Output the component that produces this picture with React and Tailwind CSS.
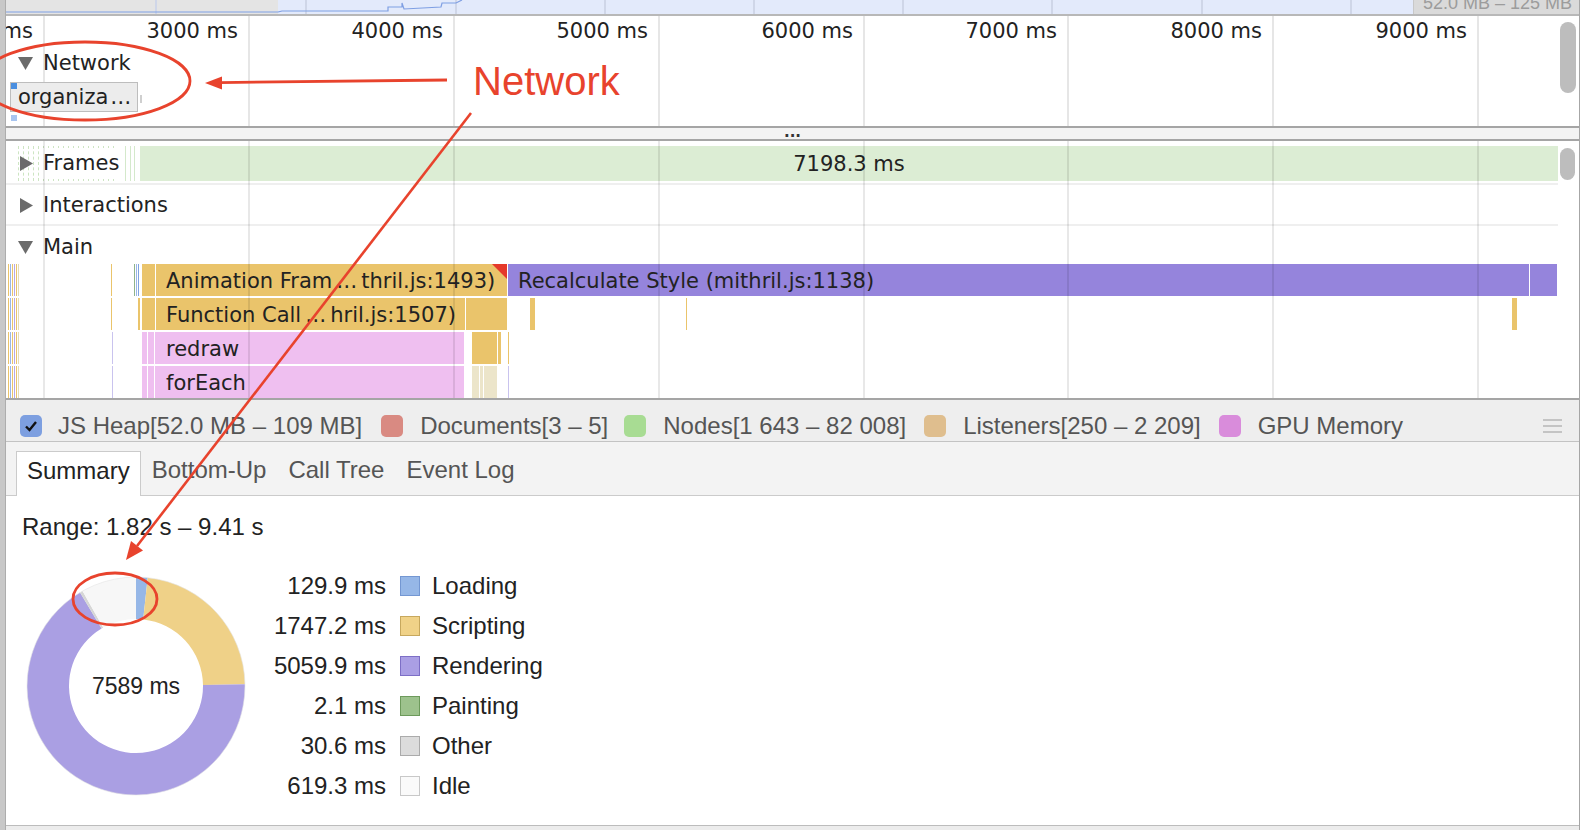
import React from "react";

// timeline grid, x relative to the main column (page x - 6)
const GRID = [37, 242, 447, 652, 857, 1061, 1266, 1471];
const RULER = ["2000 ms", "3000 ms", "4000 ms", "5000 ms", "6000 ms", "7000 ms", "8000 ms", "9000 ms"];
const OVERVIEW_GRID = [149, 299, 449, 598, 747, 896, 1045, 1195, 1344];

const Y = "bg-[#eac46b]";
const P = "bg-[#9584dc]";
const PK = "bg-[#efbff0]";
const BG = "bg-[#ece5ca]";
const W = "bg-white";

// flame chart blocks, x in page coords
const stripes = [
  { x: 8, w: 1, c: Y },
  { x: 10, w: 1, c: "bg-[#9bb6e8]" },
  { x: 12, w: 1, c: Y },
  { x: 14, w: 1, c: "bg-[#b7a8e6]" },
  { x: 16, w: 1, c: Y },
  { x: 18, w: 1, c: "bg-[#e6dcb6]" },
];

const ROWS = [
  [
    ...stripes,
    { x: 111, w: 1, c: Y },
    { x: 134, w: 1, c: "bg-[#8fb38a]" },
    { x: 136, w: 1, c: "bg-[#9bb6e8]" },
    { x: 138, w: 1, c: "bg-[#7ea3e0]" },
    { x: 142, w: 365, c: Y, t: "Animation Fram…thril.js:1493)", tx: 166, tri: true },
    { x: 155, w: 1, c: W },
    { x: 508, w: 1021, c: P, t: "Recalculate Style (mithril.js:1138)", tx: 518 },
    { x: 1530, w: 27, c: P },
  ],
  [
    ...stripes,
    { x: 111, w: 1, c: Y },
    { x: 138, w: 2, c: Y },
    { x: 142, w: 365, c: Y, t: "Function Call…hril.js:1507)", tx: 166 },
    { x: 155, w: 1, c: W },
    { x: 465, w: 1, c: W },
    { x: 530, w: 5, c: Y },
    { x: 686, w: 1, c: Y },
    { x: 1512, w: 5, c: Y },
  ],
  [
    ...stripes,
    { x: 112, w: 1, c: "bg-[#c9c3ee]" },
    { x: 142, w: 322, c: PK, t: "redraw", tx: 166 },
    { x: 147, w: 1, c: W },
    { x: 154, w: 1, c: W },
    { x: 472, w: 25, c: Y },
    { x: 498, w: 3, c: Y },
    { x: 508, w: 1, c: Y },
  ],
  [
    ...stripes,
    { x: 112, w: 1, c: "bg-[#c9c3ee]" },
    { x: 142, w: 322, c: PK, t: "forEach", tx: 166 },
    { x: 147, w: 1, c: W },
    { x: 154, w: 1, c: W },
    { x: 472, w: 25, c: BG },
    { x: 479, w: 1, c: W },
    { x: 483, w: 1, c: W },
    { x: 508, w: 1, c: "bg-[#c9c3ee]" },
  ],
];

const SUMMARY = [
  { v: 129.9, ms: "129.9 ms", name: "Loading", sw: "bg-[#96b7e7] border-[#7497d2]", fill: "#96b7e7" },
  { v: 1747.2, ms: "1747.2 ms", name: "Scripting", sw: "bg-[#f0d288] border-[#c7a85e]", fill: "#efd188" },
  { v: 5059.9, ms: "5059.9 ms", name: "Rendering", sw: "bg-[#aa9fe4] border-[#7d6fc6]", fill: "#aa9fe3" },
  { v: 2.1, ms: "2.1 ms", name: "Painting", sw: "bg-[#9dc28d] border-[#6d9a5c]", fill: "#9dc28d" },
  { v: 30.6, ms: "30.6 ms", name: "Other", sw: "bg-[#dcdcdc] border-[#ababab]", fill: "#d6d6d6" },
  { v: 619.3, ms: "619.3 ms", name: "Idle", sw: "bg-[#fafafa] border-[#c8c8c8]", fill: "#f7f7f7" },
];

const TL = "font-['DejaVu_Sans',sans-serif] text-[21px] text-[#222]";
const UI = "font-['Liberation_Sans',Arial,sans-serif]";

// the ellipsis in the timeline font is drawn a bit wider
const Trunc = ({ text }) => {
  const parts = text.split("…");
  if (parts.length < 2) return text;
  return (
    <>
      {parts[0]}
      <span className="px-[4px]">…</span>
      {parts[1]}
    </>
  );
};

const TriDown = () => (
  <svg width="15" height="13" viewBox="0 0 15 13" className="shrink-0">
    <polygon points="0,0 15,0 7.5,13" fill="#6b6b6b" />
  </svg>
);

const TriRight = () => (
  <svg width="13" height="15" viewBox="0 0 13 15" className="shrink-0">
    <polygon points="0,0 13,7.5 0,15" fill="#6b6b6b" />
  </svg>
);

const GridLines = ({ color }) =>
  GRID.map((x) => (
    <div key={x} className={`absolute top-0 bottom-0 w-[2px] z-10 ${color}`} style={{ left: x }} />
  ));

const Overview = () => (
  <div className="relative h-[16px] shrink-0 overflow-hidden bg-[#e3eafb] border-b-2 border-[#b8b8b8]">
    <div className="absolute left-0 top-0 h-full w-[272px] bg-[#e4e4e4]" />
    {OVERVIEW_GRID.map((x) => (
      <div key={x} className="absolute top-0 h-full w-[2px] bg-[#cfd6e8]" style={{ left: x }} />
    ))}
    <svg width="1572" height="14" className="absolute left-0 top-0">
      <polyline
        points="0,12 272,12 276,11 382,11 382,7 396,7 396,3 398,9 435,7 436,3 450,3 456,0"
        fill="none"
        stroke="#7f9fe3"
        strokeWidth="1.2"
      />
    </svg>
    <div className="absolute left-[1407px] right-0 top-0 h-full bg-[#dadada] border-l border-[#c8c8c8]">
      <span className={`${UI} absolute left-[9px] top-[-7px] text-[18px] leading-[20px] text-[#9c9c9c] whitespace-nowrap`}>
        52.0 MB – 125 MB
      </span>
    </div>
  </div>
);

const NetworkPane = () => (
  <div className="relative h-[112px] shrink-0 overflow-hidden border-b-2 border-[#a5a5a5]">
    <GridLines color="bg-[#e6e6e6]" />
    <div className="relative h-[30px] pt-[1px]">
      {RULER.map((t, i) => (
        <div
          key={t}
          className={`${TL} absolute top-[1px] h-full w-[130px] flex items-center justify-end whitespace-nowrap`}
          style={{ left: GRID[i] - 10 - 130 }}
        >
          {t}
        </div>
      ))}
    </div>
    <div className={`${TL} relative z-20 h-[34px] pt-[1px] flex items-center pl-[12px] gap-[10px]`}>
      <TriDown />
      <span>Network</span>
    </div>
    <div className="relative z-20 ml-[4px] mt-[2px] w-[128px] h-[30px] bg-[#ececec] border border-[#bdbdbd] flex items-center">
      <div className="absolute left-0 top-0 w-[6px] h-[6px] bg-[#4a8fe0]" />
      <span className={`${TL} pl-[7px] pt-[2px] whitespace-nowrap text-[#222]`}>
        organiza<span className="pl-[2px]">…</span>
      </span>
      <div className="absolute right-[-5px] top-[12px] w-[2px] h-[8px] bg-[#cfcfcf]" />
    </div>
    <div className="relative z-20 ml-[5px] mt-[3px] w-[6px] h-[6px] bg-[#a8c5f0]" />
    <div className="absolute z-20 left-[1554px] top-[6px] w-[16px] h-[71px] rounded-full bg-[#bdbdbd]" />
  </div>
);

const Splitter = () => (
  <div className="h-[13px] shrink-0 bg-[#f3f3f3] border-b-2 border-[#a5a5a5] flex justify-center">
    <span className="font-['DejaVu_Sans',sans-serif] font-bold text-[15px] leading-[8px] text-[#333]">...</span>
  </div>
);

const TrackLabel = ({ open, children }) => (
  <div className={`${TL} relative z-20 h-full flex items-center gap-[10px] ${open ? "pl-[12px]" : "pl-[14px]"}`}>
    {open ? <TriDown /> : <TriRight />}
    <span>{children}</span>
  </div>
);

const FlamePane = () => (
  <div className="relative h-[259px] shrink-0 overflow-hidden border-b-2 border-[#a5a5a5]">
    <GridLines color="bg-black/[0.09]" />
    <div className="h-[5px]" />
    {/* Frames */}
    <div className="relative h-[35px]">
      {Array.from({ length: 20 }, (_, i) => (
        <div
          key={i}
          className="absolute top-0 h-full border-l border-dashed border-[#cde5c2]"
          style={{ left: 12 + i * 5 }}
        />
      ))}
      <div className="absolute top-0 h-full left-[119px] w-[1px] bg-[#d4e9cb]" />
      <div className="absolute top-0 h-full left-[124px] w-[1px] bg-[#d4e9cb]" />
      <div className="absolute top-0 h-full left-[128px] w-[1px] bg-[#d4e9cb]" />
      <div className={`${TL} absolute top-0 h-full left-[134px] w-[1418px] pt-[2px] bg-[#dcedd4] flex items-center justify-center`}>
        7198.3 ms
      </div>
      <div className="absolute top-0 left-0 h-full flex items-center">
        <div className={`${TL} h-full flex items-center pl-[14px] gap-[10px]`}>
          <TriRight />
          <span className="bg-white">Frames</span>
        </div>
      </div>
    </div>
    <div className="h-[2px]" />
    <div className="h-[2px] w-[1552px] bg-[#efefef]" />
    <div className="h-[39px] pt-[2px]">
      <TrackLabel>Interactions</TrackLabel>
    </div>
    <div className="h-[2px] w-[1552px] bg-[#efefef]" />
    <div className="h-[38px] pt-[5px]">
      <TrackLabel open>Main</TrackLabel>
    </div>
    {ROWS.map((row, r) => (
      <div key={r} className="relative h-[32px] mb-[2px]">
        {row.map((b, i) => (
          <div key={i} className={`absolute top-0 h-full ${b.c}`} style={{ left: b.x - 6, width: b.w }}>
            {b.t && (
              <span
                className={`${TL} absolute top-0 h-full pt-[3px] flex items-center whitespace-nowrap text-[#2a2a2a]`}
                style={{ left: b.tx - b.x }}
              >
                <Trunc text={b.t} />
              </span>
            )}
            {b.tri && (
              <svg width="15" height="15" viewBox="0 0 15 15" className="absolute right-0 top-0">
                <polygon points="0,0 15,0 15,15" fill="#e5392a" />
              </svg>
            )}
          </div>
        ))}
      </div>
    ))}
    <div className="absolute z-20 left-[1554px] top-[7px] w-[15px] h-[32px] rounded-full bg-[#bdbdbd]" />
  </div>
);

const Counter = ({ swatch, label }) => (
  <div className="flex items-center mr-[18px]">
    <div className={`w-[22px] h-[22px] rounded-[5px] mr-[17px] ${swatch}`} />
    <span>{label}</span>
  </div>
);

const Counters = () => (
  <div className={`${UI} h-[42px] shrink-0 bg-[#eeeeee] border-b border-[#c3c3c3] pt-[11px] pl-[14px] flex items-center text-[24px] text-[#555] whitespace-nowrap`}>
    <div className="flex items-center mr-[19px]">
      <div className="w-[22px] h-[22px] rounded-[5px] mr-[16px] bg-[#7d9fe0] flex items-center justify-center">
        <svg width="16" height="16" viewBox="0 0 16 16">
          <path d="M3 8.5 L6.5 12 L13 4" fill="none" stroke="#111" strokeWidth="2.4" />
        </svg>
      </div>
      <span>JS Heap[52.0 MB – 109 MB]</span>
    </div>
    <div className="flex items-center mr-[16px]">
      <div className="w-[22px] h-[22px] rounded-[5px] mr-[17px] bg-[#d98a82]" />
      <span>Documents[3 – 5]</span>
    </div>
    <Counter swatch="bg-[#a8dc93]" label="Nodes[1 643 – 82 008]" />
    <Counter swatch="bg-[#dfbe8e]" label="Listeners[250 – 2 209]" />
    <Counter swatch="bg-[#d98cdb]" label="GPU Memory" />
    <div className="ml-auto mr-[17px] flex flex-col gap-[4px]">
      <div className="w-[19px] h-[2px] bg-[#c4c4c4]" />
      <div className="w-[19px] h-[2px] bg-[#c4c4c4]" />
      <div className="w-[19px] h-[2px] bg-[#c4c4c4]" />
    </div>
  </div>
);

const Tabs = () => (
  <div className={`${UI} h-[54px] shrink-0 bg-[#f3f3f3] border-b border-[#cbcbcb] pl-[10px] flex items-end text-[24px] text-[#555]`}>
    <div className="h-[45px] -mb-[1px] px-[10px] pb-[6px] bg-white border border-b-0 border-[#cbcbcb] flex items-center text-[#222]">
      Summary
    </div>
    {["Bottom-Up", "Call Tree", "Event Log"].map((t) => (
      <div key={t} className="h-[45px] px-[11px] pb-[6px] flex items-center">
        {t}
      </div>
    ))}
  </div>
);

const polar = (cx, cy, r, a) => {
  const rad = (a * Math.PI) / 180;
  return [cx + r * Math.sin(rad), cy - r * Math.cos(rad)];
};

const arcPath = (cx, cy, r0, r1, a0, a1) => {
  const large = a1 - a0 > 180 ? 1 : 0;
  const [x0, y0] = polar(cx, cy, r1, a0);
  const [x1, y1] = polar(cx, cy, r1, a1);
  const [x2, y2] = polar(cx, cy, r0, a1);
  const [x3, y3] = polar(cx, cy, r0, a0);
  return `M${x0} ${y0} A${r1} ${r1} 0 ${large} 1 ${x1} ${y1} L${x2} ${y2} A${r0} ${r0} 0 ${large} 0 ${x3} ${y3} Z`;
};

const Donut = () => {
  const total = SUMMARY.reduce((s, d) => s + d.v, 0);
  let a = 0;
  return (
    <div className="relative w-[222px] h-[222px] shrink-0">
      <svg width="222" height="222" viewBox="0 0 222 222">
        {SUMMARY.map((d) => {
          const a0 = a;
          a += (d.v / total) * 360;
          return <path key={d.name} d={arcPath(111, 111, 67, 109, a0, a)} fill={d.fill} />;
        })}
        <circle cx="111" cy="111" r="109" fill="none" stroke="#e4e4e4" strokeWidth="0.6" />
      </svg>
      <div className="absolute inset-0 flex items-center justify-center text-[23px] text-[#222]">7589 ms</div>
    </div>
  );
};

const Summary = () => (
  <div className={`${UI} h-[330px] shrink-0 bg-white border-b border-[#bcbcbc] pl-[16px]`}>
    <div className="pt-[17px] h-[45px] text-[24px] leading-[28px] text-[#222]">Range: 1.82 s – 9.41 s</div>
    <div className="mt-[25px] flex items-start">
      <div className="mt-[9px] ml-[3px]">
        <Donut />
      </div>
      <div className="ml-[19px] flex flex-col text-[24px] text-[#222]">
        {SUMMARY.map((d) => (
          <div key={d.name} className="h-[40px] flex items-center">
            <span className="w-[120px] text-right">{d.ms}</span>
            <div className={`w-[20px] h-[20px] border ml-[14px] mr-[12px] ${d.sw}`} />
            <span>{d.name}</span>
          </div>
        ))}
      </div>
    </div>
  </div>
);

const Annotations = () => (
  <div className="absolute inset-0 pointer-events-none z-30">
    <svg width="1582" height="830" className="absolute left-0 top-0">
      <ellipse cx="85" cy="81" rx="105" ry="39" fill="none" stroke="#e8432d" strokeWidth="2.8" />
      <line x1="219" y1="82.6" x2="447" y2="80" stroke="#e8432d" strokeWidth="2.8" />
      <polygon points="205,83 222,76.5 222,89.5" fill="#e8432d" />
      <line x1="471" y1="113" x2="137" y2="546" stroke="#e8432d" strokeWidth="2.6" />
      <polygon points="126,560 143,550.5 131,541" fill="#e8432d" />
      <ellipse cx="115" cy="599" rx="42" ry="26" fill="none" stroke="#e8432d" strokeWidth="2.8" />
    </svg>
    <div className={`${UI} absolute left-[473px] top-[61px] text-[40px] leading-none text-[#e8432d]`}>Network</div>
  </div>
);

export default function App() {
  return (
    <div className="relative w-[1582px] h-[830px] overflow-hidden bg-white flex">
      <div className="w-[6px] h-full shrink-0 bg-[#c8c8c8] border-r border-[#adadad]" />
      <div className="w-[1574px] h-full shrink-0 flex flex-col border-r border-[#a6a6a6]">
        <Overview />
        <NetworkPane />
        <Splitter />
        <FlamePane />
        <Counters />
        <Tabs />
        <Summary />
        <div className="flex-1 bg-[#ececec]" />
      </div>
      <Annotations />
    </div>
  );
}
